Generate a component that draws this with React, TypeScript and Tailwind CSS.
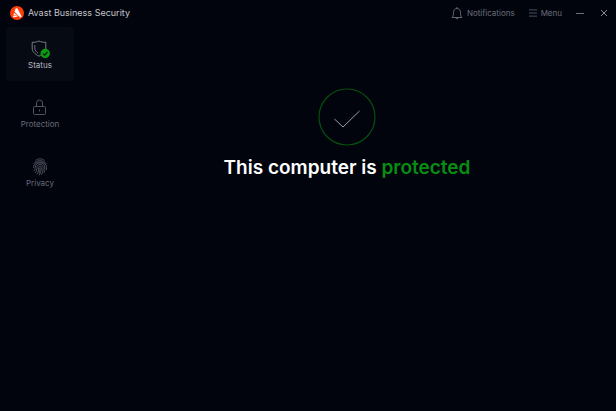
import type { ReactNode } from "react";

interface NavItem {
  id: string;
  label: string;
  icon: ReactNode;
}

function AvastLogo() {
  return (
    <svg viewBox="0 0 28 28" className="h-3.5 w-3.5" aria-hidden="true">
      <circle cx="14" cy="14" r="14" fill="#ff3d0a" />
      <path d="M10.500 6.800c.8-2.600 4-3 5.300-.4l7 13.400c.8 2-1.400 3.600-3.100 2.400L9 11.500z" fill="#fff" />
      <path d="M8.200 14.200l7.900 5.600-9-2z" fill="#fff" />
      <path d="M6.600 19l10 1.900-8.200 1.400c-1.900.2-2.800-1.600-1.800-3.300z" fill="#fff" />
    </svg>
  );
}

function ShieldIcon() {
  return (
    <svg viewBox="0 0 20 20" className="h-5 w-5" fill="none" aria-hidden="true">
      <path
        d="M9 2c2 1 4 1.300 6.800 1.300v5.700c0 3.500-2.600 6.200-6.800 8.200-4.200-2-6.800-4.700-6.800-8.200V3.300C5 3.300 7 3 9 2z"
        stroke="#858894"
        strokeWidth="0.9"
      />
      <path d="M4.800 6v3c0 2 1.300 3.800 3.400 5.300" stroke="#858894" strokeWidth="0.8" />
      <circle cx="15.200" cy="14.500" r="4.700" fill="#0a9a12" />
      <path d="M13 14.600l1.600 1.500 2.900-3.100" stroke="#021006" strokeWidth="1.1" />
    </svg>
  );
}

function LockIcon() {
  return (
    <svg viewBox="0 0 20 20" className="h-5 w-5" fill="none" stroke="#50545f" strokeWidth="1" aria-hidden="true">
      <rect x="3.500" y="8.500" width="12" height="8" rx="1" />
      <path d="M6.500 8.500V5a3 3 0 0 1 6 0v3.500M9.500 11.500v2" />
    </svg>
  );
}

function FingerprintIcon() {
  return (
    <svg viewBox="0 0 20 20" className="h-5 w-5" fill="none" stroke="#5a5e69" strokeWidth="0.8" strokeLinecap="round" aria-hidden="true">
      <path d="M5.800 3.200C8 1.400 12 1.400 14.200 3.200" />
      <path d="M3.800 6.600C6.300 2.600 13.700 2.600 16.200 6.600" />
      <path d="M3.500 10.500C3.500 3.200 16.500 3.200 16.500 10.500v2" />
      <path d="M4 14c1.500-1.200 1.200-2.500 1.200-4 0-5.400 9.600-5.400 9.600 0 0 2.300 0 3.800-.6 5.500" />
      <path d="M5.300 15.700C7 14 6.900 12 6.900 10.200c0-3.600 6.200-3.600 6.200 0 0 3-.2 4.800-1.500 7.300" />
      <path d="M7 17c1.600-2 1.700-4.500 1.700-6.600 0-1.600 2.600-1.600 2.600 0 0 2.800-.3 5-2 7.600" />
      <path d="M10 11c0 2-.2 3.500-.8 5" />
    </svg>
  );
}

const navItems: NavItem[] = [
  { id: "status", label: "Status", icon: <ShieldIcon /> },
  { id: "protection", label: "Protection", icon: <LockIcon /> },
  { id: "privacy", label: "Privacy", icon: <FingerprintIcon /> },
];

export default function App() {
  const active = "status";

  return (
    <div className="flex min-h-screen flex-col bg-[#01040d] font-['Inter',sans-serif]">
      <header className="flex h-[25px] items-center justify-between pr-2 pl-2.5 text-[#6b6f7a]">
        <div className="flex items-center gap-1">
          <AvastLogo />
          <h1 className="text-[9px] text-[#c3c5ca]">Avast Business Security</h1>
        </div>
        <div className="flex items-center text-[8px]">
          <button type="button" className="mr-3.5 flex items-center gap-1">
            <svg viewBox="0 0 12 14" className="h-3.5 w-3" fill="none" stroke="currentColor" strokeWidth="0.9" aria-hidden="true">
              <path d="M1 11.500C2.200 10.500 2.500 9 2.500 6.500 2.500 4 4 2.500 6 2.500s3.500 1.500 3.500 4c0 2.500.3 4 1.500 5zM6 1v1.500M4.800 11.700c.2 1.600 2.200 1.600 2.400 0" />
            </svg>
            Notifications
          </button>
          <button type="button" className="mr-3.5 flex items-center gap-1">
            <svg viewBox="0 0 9 8" className="h-2 w-2" stroke="currentColor" strokeWidth="0.8" aria-hidden="true">
              <path d="M0 .5h9M0 4h9M0 7.500h9" />
            </svg>
            Menu
          </button>
          <button type="button" aria-label="Minimize" className="mr-4">
            <svg viewBox="0 0 8 8" className="h-2 w-2" stroke="currentColor" strokeWidth="1">
              <path d="M0 4.500h8" />
            </svg>
          </button>
          <button type="button" aria-label="Close">
            <svg viewBox="0 0 8 8" className="h-2 w-2" stroke="#989ba4" strokeWidth="0.9">
              <path d="M1 1l6 6M7 1l-6 6" />
            </svg>
          </button>
        </div>
      </header>

      <div className="flex flex-1">
        <nav className="flex w-[78px] shrink-0 flex-col gap-[5px] pt-0.5 pr-1 pl-1.5">
          {navItems.map((item) => (
            <button
              key={item.id}
              type="button"
              aria-current={item.id === active ? "page" : undefined}
              className={`flex h-[54px] w-full flex-col items-center justify-center rounded pt-0.5 text-[8px] leading-3 ${
                item.id === active ? "bg-[#060a13] text-[#b9bbc2]" : "text-[#686c77]"
              }`}
            >
              {item.icon}
              {item.label}
            </button>
          ))}
        </nav>

        <main className="flex flex-1 flex-col items-center pt-[63px]">
          <svg viewBox="0 0 58 58" className="h-[58px] w-[58px]" fill="none" aria-hidden="true">
            <circle cx="29" cy="29" r="28" stroke="#06500f" strokeWidth="1.2" />
            <path d="M16.500 31l8.500 8L41.500 23" stroke="#9b9da5" />
          </svg>
          <h2 className="mt-2 text-[19px] leading-7 font-semibold text-white">
            This computer is <span className="text-[#078d12]">protected</span>
          </h2>
        </main>
      </div>
    </div>
  );
}
